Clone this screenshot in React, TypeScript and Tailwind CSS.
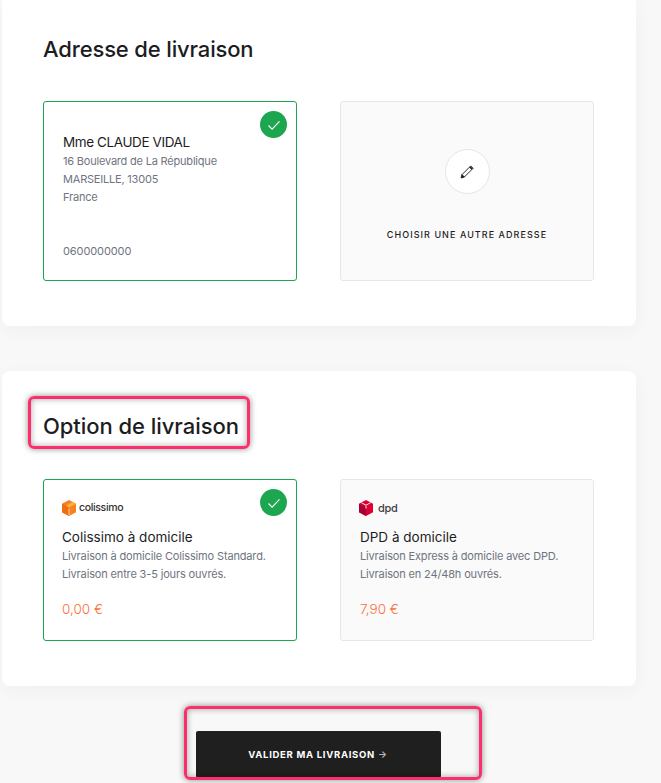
import React from 'react';

const FONT = "font-['Inter','Liberation_Sans',sans-serif]";

const Check = () => (
  <span className="absolute top-[9px] right-[9px] flex h-[27px] w-[27px] items-center justify-center rounded-full bg-[#1ba64f]">
    <svg width="14" height="14" viewBox="0 0 14 14" fill="none" stroke="#fff" strokeWidth="1.1">
      <path d="M1.5 7.5l3.6 3.6 7.4-7.8" />
    </svg>
  </span>
);

const ColissimoLogo = () => (
  <div className="flex items-center gap-[3px]">
    <svg width="14" height="16" viewBox="0 0 15 17">
      <path d="M7.5 0L15 4v9l-7.5 4L0 13V4z" fill="#f58220" />
      <path d="M7.5 8v9L0 13V4z" fill="#ee6c12" />
      <path d="M7.5 8L15 4l-3.5-2L4 6z" fill="#fbb040" />
      <path d="M7 9h1v7H7z" fill="#ffd9a8" />
    </svg>
    <span className="text-[10.5px] leading-none font-medium tracking-[-0.35px] text-[#333]">colissimo</span>
  </div>
);

const DpdLogo = () => (
  <div className="-ml-px flex items-center gap-[5px]">
    <svg width="14" height="16" viewBox="0 0 15 17">
      <path d="M7.5 0L15 4v9l-7.5 4L0 13V4z" fill="#dc0032" />
      <path d="M7.5 8v9L0 13V4z" fill="#a90034" />
      <path d="M3 2.5L7.5 5 12 2.5 13 3 7.5 6.2 2 3z" fill="#fff" />
      <path d="M7 6.5h1v2.5H7z" fill="#fff" />
    </svg>
    <span className="text-[11px] leading-none font-medium tracking-[-0.3px] text-[#414042]">dpd</span>
  </div>
);

type OptionProps = {
  logo: React.ReactNode;
  title: string;
  lines: string[];
  price: string;
  selected?: boolean;
};

const DeliveryOption = ({ logo, title, lines, price, selected }: OptionProps) => (
  <div
    className={`relative h-[162px] w-[254px] rounded-[3px] border pt-[20px] ${
      selected ? 'border-[#1ba64f] bg-white pl-[18px]' : 'border-[#e6e6e6] bg-[#fafafa] pl-[19px]'
    }`}
  >
    {selected && <Check />}
    <div className="h-[17px]">{logo}</div>
    <p className="mt-[10px] text-[13.5px] leading-[20px] text-[#1d1d1f]">{title}</p>
    {lines.map((line) => (
      <p key={line} className="text-[11px] leading-[18px] tracking-[-0.15px] text-[#6f7480]">
        {line}
      </p>
    ))}
    <p className="mt-[16px] text-[13.5px] leading-[20px] font-light text-[#fb6f3b]">{price}</p>
  </div>
);

export default function App() {
  return (
    <div className={`relative h-[783px] w-[661px] overflow-hidden bg-[#f8f8f8] ${FONT}`}>
      <section className="ml-[2px] h-[326px] w-[634px] rounded-b-[8px] bg-white px-[41px] pt-[35px] shadow-[0_4px_20px_rgba(0,0,0,0.04)]">
        <h2 className="text-[22px] leading-[28px] font-medium tracking-[-0.15px] text-[#1d1d1f]">Adresse de livraison</h2>
        <div className="mt-[38px] flex gap-[43px]">
          <div className="relative h-[180px] w-[254px] rounded-[3px] border border-[#1ba64f] bg-white pt-[30px] pl-[19px]">
            <Check />
            <p className="text-[13.5px] leading-[20px] tracking-[-0.4px] text-[#1d1d1f]">Mme CLAUDE VIDAL</p>
            <p className="text-[11px] leading-[18px] tracking-[-0.2px] text-[#6f7480]">16 Boulevard de La République</p>
            <p className="text-[11px] leading-[18px] tracking-[-0.2px] text-[#6f7480]">MARSEILLE, 13005</p>
            <p className="text-[11px] leading-[18px] tracking-[-0.2px] text-[#6f7480]">France</p>
            <p className="mt-[36px] text-[11px] leading-[18px] tracking-[-0.1px] text-[#6f7480]">0600000000</p>
          </div>
          <div className="flex h-[180px] w-[254px] flex-col items-center rounded-[3px] border border-[#e6e6e6] bg-[#fafafa] pt-[47px]">
            <span className="flex h-[45px] w-[45px] items-center justify-center rounded-full border border-[#e6e6e6] bg-white">
              <svg className="ml-px" width="15" height="15" viewBox="0 0 14 14" fill="none" stroke="#222" strokeWidth="0.9">
                <path d="M4 12.2L12.2 4 10 1.8 1.8 10z" />
                <path d="M1.8 10L1 13l3-.8z" fill="#222" />
                <path d="M9.2 2.6l2.2 2.2" strokeWidth="1.6" />
              </svg>
            </span>
            <p className="mt-[34px] text-[9px] leading-[14px] font-medium tracking-[1.05px] text-[#1d1d1f]">
              CHOISIR UNE AUTRE ADRESSE
            </p>
          </div>
        </div>
      </section>

      <section className="mt-[45px] ml-[2px] h-[315px] w-[634px] rounded-[8px] bg-white px-[41px] pt-[41px] shadow-[0_4px_20px_rgba(0,0,0,0.04)]">
        <h2 className="text-[22px] leading-[28px] font-medium tracking-[-0.05px] text-[#1d1d1f]">Option de livraison</h2>
        <div className="mt-[39px] flex gap-[43px]">
          <DeliveryOption
            selected
            logo={<ColissimoLogo />}
            title="Colissimo à domicile"
            lines={['Livraison à domicile Colissimo Standard.', 'Livraison entre 3-5 jours ouvrés.']}
            price="0,00 €"
          />
          <DeliveryOption
            logo={<DpdLogo />}
            title="DPD à domicile"
            lines={['Livraison Express à domicile avec DPD.', 'Livraison en 24/48h ouvrés.']}
            price="7,90 €"
          />
        </div>
      </section>

      <div className="mt-[45px] ml-[1px] flex w-[634px] justify-center">
        <button className="h-[47px] w-[245px] rounded-[2px] bg-[#1f1f1f] pt-px text-[9.5px] font-bold tracking-[0.7px] text-white">
          VALIDER MA LIVRAISON <span className="text-[#b5b5b5]">→</span>
        </button>
      </div>

      {/* annotation frames drawn over the screenshot */}
      <div className="absolute top-[396px] left-[28px] h-[53px] w-[222px] rounded-[6px] border-[3px] border-[#fb2f6b] shadow-[0_0_6px_rgba(0,0,0,0.45),inset_0_0_6px_rgba(0,0,0,0.35)]" />
      <div className="absolute top-[706px] left-[184px] h-[74px] w-[298px] rounded-[6px] border-[3px] border-[#fb2f6b] shadow-[0_0_6px_rgba(0,0,0,0.45),inset_0_0_6px_rgba(0,0,0,0.35)]" />
    </div>
  );
}
